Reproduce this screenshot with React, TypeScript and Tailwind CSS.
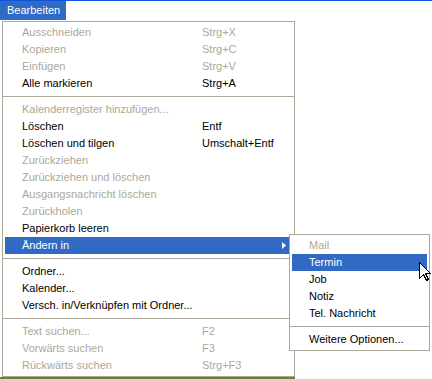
import React from 'react'

type Item =
  | { kind: 'sep' }
  | { kind: 'item'; label: string; shortcut?: string; disabled?: boolean; active?: boolean; sub?: boolean }

const mainItems: Item[] = [
  { kind: 'item', label: 'Ausschneiden', shortcut: 'Strg+X', disabled: true },
  { kind: 'item', label: 'Kopieren', shortcut: 'Strg+C', disabled: true },
  { kind: 'item', label: 'Einfügen', shortcut: 'Strg+V', disabled: true },
  { kind: 'item', label: 'Alle markieren', shortcut: 'Strg+A' },
  { kind: 'sep' },
  { kind: 'item', label: 'Kalenderregister hinzufügen...', disabled: true },
  { kind: 'item', label: 'Löschen', shortcut: 'Entf' },
  { kind: 'item', label: 'Löschen und tilgen', shortcut: 'Umschalt+Entf' },
  { kind: 'item', label: 'Zurückziehen', disabled: true },
  { kind: 'item', label: 'Zurückziehen und löschen', disabled: true },
  { kind: 'item', label: 'Ausgangsnachricht löschen', disabled: true },
  { kind: 'item', label: 'Zurückholen', disabled: true },
  { kind: 'item', label: 'Papierkorb leeren' },
  { kind: 'item', label: 'Ändern in', active: true, sub: true },
  { kind: 'sep' },
  { kind: 'item', label: 'Ordner...' },
  { kind: 'item', label: 'Kalender...' },
  { kind: 'item', label: 'Versch. in/Verknüpfen mit Ordner...' },
  { kind: 'sep' },
  { kind: 'item', label: 'Text suchen...', shortcut: 'F2', disabled: true },
  { kind: 'item', label: 'Vorwärts suchen', shortcut: 'F3', disabled: true },
  { kind: 'item', label: 'Rückwärts suchen', shortcut: 'Strg+F3', disabled: true },
]

const subItems: Item[] = [
  { kind: 'item', label: 'Mail', disabled: true },
  { kind: 'item', label: 'Termin', active: true },
  { kind: 'item', label: 'Job' },
  { kind: 'item', label: 'Notiz' },
  { kind: 'item', label: 'Tel. Nachricht' },
  { kind: 'sep' },
  { kind: 'item', label: 'Weitere Optionen...' },
]

function MenuRows({ items, labelWidth }: { items: Item[]; labelWidth: string }) {
  return (
    <>
      {items.map((it, i) => {
        if (it.kind === 'sep') {
          return (
            <div key={i} className="py-[4px] -mx-[2px]">
              <div className="h-px bg-[#aca899]" />
            </div>
          )
        }
        const color = it.active ? 'bg-[#316ac5] text-white' : it.disabled ? 'text-[#aca899]' : 'text-black'
        return (
          <div key={i} className={`relative flex h-[17px] items-center pl-[17px] whitespace-nowrap ${color}`}>
            <span className={labelWidth}>{it.label}</span>
            {it.shortcut && <span>{it.shortcut}</span>}
            {it.sub && (
              <svg className="absolute right-[6px] top-[5px]" width="4" height="7" viewBox="0 0 4 7">
                <path d="M0 0 L4 3.5 L0 7 Z" fill="white" />
              </svg>
            )}
          </div>
        )
      })}
    </>
  )
}

export default function App() {
  return (
    <div
      className="relative h-[379px] w-[432px] overflow-hidden bg-white text-[11px] leading-none"
      style={{ fontFamily: '"Liberation Sans", Arial, sans-serif' }}
    >
      <div className="h-px bg-[#0a55e0]" />
      <div className="flex h-[19px] w-[66px] items-center bg-[#316ac5] pl-[7px] text-white">Bearbeiten</div>
      <div className="h-[1px]" />

      {/* main menu */}
      <div className="ml-[2px] w-[293px] border border-[#aca899] bg-white p-[2px]">
        <MenuRows items={mainItems} labelWidth="w-[180px]" />
      </div>
      <div className="h-[3px] w-[295px] bg-[#5e8a2c]" />

      {/* submenu */}
      <div className="absolute left-[289px] top-[234px] w-[141px] border border-[#aca899] bg-white p-[2px]">
        <MenuRows items={subItems} labelWidth="" />
      </div>

      {/* cursor */}
      <svg className="absolute left-[419px] top-[262px]" width="12" height="20" viewBox="0 0 12 20">
        <path
          d="M0.5 0.5 L0.5 16.5 L4.5 12.5 L7.5 18.5 L9.5 17.5 L6.5 11.5 L11.5 11.5 Z"
          fill="white"
          stroke="black"
          strokeWidth="1"
          shapeRendering="crispEdges"
        />
      </svg>
    </div>
  )
}
